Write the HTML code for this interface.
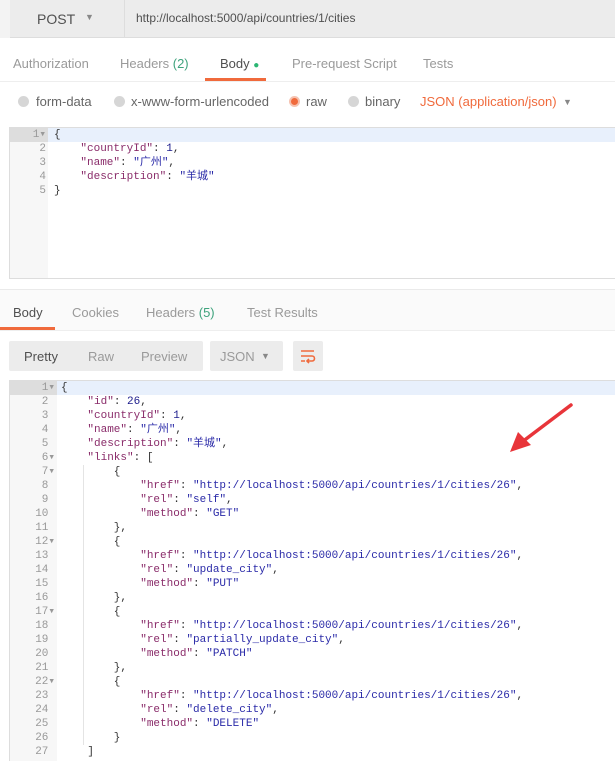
<!DOCTYPE html>
<html><head><meta charset="utf-8"><style>
*{margin:0;padding:0;box-sizing:border-box}
body{width:615px;height:761px;overflow:hidden;background:#fff;font-family:"Liberation Sans","Noto Sans CJK SC",sans-serif;position:relative;color:#505050}
.a{position:absolute;white-space:nowrap}
.t{font-size:13px;color:#9a9a9a}
.code{font-family:"Liberation Mono","Noto Sans CJK SC",monospace;font-size:11px;line-height:14px;white-space:pre;color:#333}
.k{color:#8a2c6a}.s{color:#2a2aa8}.n{color:#1c1c8c}
.ln{font-family:"Liberation Mono",monospace;font-size:11px;line-height:14px;color:#999;text-align:right;white-space:pre}
.rad{width:11px;height:11px;border-radius:50%;background:#d6d6d6;position:absolute}
</style></head><body>
<div class="a" style="left:0;top:0;width:615px;height:38px;background:#f3f3f3"></div>
<div class="a" style="left:10px;top:0;width:605px;height:38px;background:#ececec;border-bottom:1px solid #ddd"></div>
<div class="a" style="left:124px;top:0;width:1px;height:38px;background:#ddd"></div>
<div class="a" style="left:37px;top:11px;font-size:14px;color:#505050">POST</div>
<div class="a" style="left:85px;top:12px;font-size:9px;color:#888">▼</div>
<div class="a" style="left:136px;top:11px;font-size:12px;color:#505050">http://localhost:5000/api/countries/1/cities</div>

<div class="a t" style="left:13px;top:56px">Authorization</div>
<div class="a t" style="left:120px;top:56px">Headers <span style="color:#3fa37d">(2)</span></div>
<div class="a" style="left:220px;top:56px;font-size:13px;color:#505050">Body <span style="color:#2bb673;font-size:10px">●</span></div>
<div class="a t" style="left:292px;top:56px">Pre-request Script</div>
<div class="a t" style="left:423px;top:56px">Tests</div>
<div class="a" style="left:205px;top:78px;width:61px;height:3px;background:#f06a3c"></div>
<div class="a" style="left:0;top:81px;width:615px;height:1px;background:#eee"></div>

<div class="rad" style="left:18px;top:96px"></div><div class="a" style="left:36px;top:94px;font-size:13px;color:#666">form-data</div>
<div class="rad" style="left:114px;top:96px"></div><div class="a" style="left:131px;top:94px;font-size:13px;color:#666">x-www-form-urlencoded</div>
<div class="rad" style="left:289px;top:96px;background:#f06a3c;border:2px solid #f5c2b0"></div><div class="a" style="left:306px;top:94px;font-size:13px;color:#666">raw</div>
<div class="rad" style="left:348px;top:96px"></div><div class="a" style="left:365px;top:94px;font-size:13px;color:#666">binary</div>
<div class="a" style="left:420px;top:94px;font-size:13px;color:#f06a3c">JSON (application/json)</div>
<div class="a" style="left:563px;top:97px;font-size:9px;color:#888">▼</div>

<div class="a" style="left:9px;top:127px;width:606px;height:152px;border:1px solid #ddd;border-right:none"></div>
<div class="a" style="left:10px;top:128px;width:38px;height:150px;background:#f7f7f7"></div>
<div class="a" style="left:10px;top:128px;width:605px;height:14px;background:#e8f0fc"></div>
<div class="a" style="left:10px;top:128px;width:38px;height:14px;background:#ddd"></div>
<div class="a ln" style="left:10px;top:128px;width:36px">1▾
2
3
4
5</div>
<div class="a code" style="left:54px;top:128px">{
    <span class="k">"countryId"</span>: <span class="n">1</span>,
    <span class="k">"name"</span>: <span class="s">"广州"</span>,
    <span class="k">"description"</span>: <span class="s">"羊城"</span>
}</div>

<div class="a" style="left:0;top:289px;width:615px;height:42px;background:#fafafa;border-top:1px solid #eaeaea;border-bottom:1px solid #eee"></div>
<div class="a" style="left:13px;top:305px;font-size:13px;color:#505050">Body</div>
<div class="a t" style="left:72px;top:305px">Cookies</div>
<div class="a t" style="left:146px;top:305px">Headers <span style="color:#3fa37d">(5)</span></div>
<div class="a t" style="left:247px;top:305px">Test Results</div>
<div class="a" style="left:0;top:327px;width:55px;height:3px;background:#f06a3c"></div>

<div class="a" style="left:9px;top:341px;width:194px;height:30px;background:#ececec;border-radius:2px"></div>
<div class="a" style="left:24px;top:349px;font-size:13px;color:#505050">Pretty</div>
<div class="a t" style="left:88px;top:349px">Raw</div>
<div class="a t" style="left:141px;top:349px">Preview</div>
<div class="a" style="left:210px;top:341px;width:73px;height:30px;background:#ececec;border-radius:2px"></div>
<div class="a t" style="left:220px;top:349px">JSON</div>
<div class="a" style="left:261px;top:351px;font-size:9px;color:#888">▼</div>
<div class="a" style="left:293px;top:341px;width:30px;height:30px;background:#ececec;border-radius:2px"></div>
<svg class="a" style="left:299px;top:347px" width="18" height="18" viewBox="0 0 18 18"><g stroke="#f06a3c" stroke-width="1.6" fill="none"><path d="M2 4h13M2 9h11a2.5 2.5 0 0 1 0 5H9M2 14h4"/><path d="M10 12l-2 2 2 2"/></g></svg>

<div class="a" style="left:9px;top:380px;width:606px;height:381px;border:1px solid #ddd;border-right:none;border-bottom:none"></div>
<div class="a" style="left:10px;top:381px;width:47px;height:380px;background:#f7f7f7"></div>
<div class="a" style="left:10px;top:381px;width:605px;height:14px;background:#e8f0fc"></div>
<div class="a" style="left:10px;top:381px;width:47px;height:14px;background:#ddd"></div>
<div class="a ln" style="left:10px;top:381px;width:45px">1▾
2 
3 
4 
5 
6▾
7▾
8 
9 
10 
11 
12▾
13 
14 
15 
16 
17▾
18 
19 
20 
21 
22▾
23 
24 
25 
26 
27 </div>
<div class="a" style="left:83px;top:465px;width:1px;height:280px;background:#e4e4e4"></div>
<div class="a code" style="left:61px;top:381px">{
    <span class="k">"id"</span>: <span class="n">26</span>,
    <span class="k">"countryId"</span>: <span class="n">1</span>,
    <span class="k">"name"</span>: <span class="s">"广州"</span>,
    <span class="k">"description"</span>: <span class="s">"羊城"</span>,
    <span class="k">"links"</span>: [
        {
            <span class="k">"href"</span>: <span class="s">"http://localhost:5000/api/countries/1/cities/26"</span>,
            <span class="k">"rel"</span>: <span class="s">"self"</span>,
            <span class="k">"method"</span>: <span class="s">"GET"</span>
        },
        {
            <span class="k">"href"</span>: <span class="s">"http://localhost:5000/api/countries/1/cities/26"</span>,
            <span class="k">"rel"</span>: <span class="s">"update_city"</span>,
            <span class="k">"method"</span>: <span class="s">"PUT"</span>
        },
        {
            <span class="k">"href"</span>: <span class="s">"http://localhost:5000/api/countries/1/cities/26"</span>,
            <span class="k">"rel"</span>: <span class="s">"partially_update_city"</span>,
            <span class="k">"method"</span>: <span class="s">"PATCH"</span>
        },
        {
            <span class="k">"href"</span>: <span class="s">"http://localhost:5000/api/countries/1/cities/26"</span>,
            <span class="k">"rel"</span>: <span class="s">"delete_city"</span>,
            <span class="k">"method"</span>: <span class="s">"DELETE"</span>
        }
    ]</div>
<svg class="a" style="left:500px;top:398px" width="80" height="60" viewBox="0 0 80 60"><path d="M71 7L22 44" stroke="#e8353a" stroke-width="3.5" stroke-linecap="round"/><path d="M10 54L18 34L31 47Z" fill="#e8353a"/></svg>
</body></html>
